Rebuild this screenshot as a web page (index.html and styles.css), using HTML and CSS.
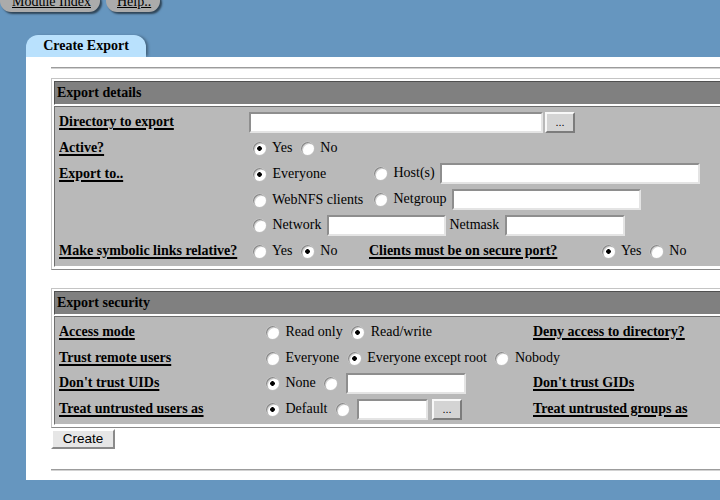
FILE: index.html
```html
<!DOCTYPE html>
<html>
<head>
<meta charset="utf-8">
<title>Create Export</title>
<link rel="stylesheet" href="styles.css">
</head>
<body>
<div class="topbar">
  <a class="pill pill-mod" href="#">Module Index</a>
  <a class="pill pill-help" href="#">Help..</a>
</div>
<div class="tab">Create Export</div>
<div class="panel">
  <hr class="rule">
  <div class="box">
    <div class="box-head">Export details</div>
    <div class="box-body">
      <div class="row">
        <div class="c1"><a class="lbl" href="#">Directory to export</a></div>
        <input class="tx tx-dir" type="text"><button class="dots dots-dir">...</button>
      </div>
      <div class="row">
        <div class="c1"><a class="lbl" href="#">Active?</a></div>
        <div class="c2"><input class="rb" type="radio" name="act" checked> Yes <input class="rb" type="radio" name="act"> No</div>
      </div>
      <div class="row">
        <div class="c1"><a class="lbl" href="#">Export to..</a></div>
        <div class="c2"><input class="rb" type="radio" name="to" checked> Everyone</div>
        <div class="c3"><input class="rb" type="radio" name="to"> Host(s) <input class="tx tx-host" type="text"></div>
      </div>
      <div class="row">
        <div class="c1"></div>
        <div class="c2"><input class="rb" type="radio" name="to"> WebNFS clients</div>
        <div class="c3"><input class="rb" type="radio" name="to"> Netgroup <input class="tx tx-ng" type="text"></div>
      </div>
      <div class="row">
        <div class="c1"></div>
        <div class="cflow"><input class="rb" type="radio" name="to"> Network <input class="tx tx-net" type="text"> Netmask <input class="tx tx-mask" type="text"></div>
      </div>
      <div class="row">
        <div class="c1"><a class="lbl" href="#">Make symbolic links relative?</a></div>
        <div class="c2"><input class="rb" type="radio" name="sym"> Yes <input class="rb" type="radio" name="sym" checked> No</div>
        <div class="c3"><a class="lbl" href="#">Clients must be on secure port?</a></div>
        <div class="c4"><input class="rb" type="radio" name="sec" checked> Yes <input class="rb" type="radio" name="sec"> No</div>
      </div>
    </div>
  </div>

  <div class="box box-sec">
    <div class="box-head">Export security</div>
    <div class="box-body">
      <div class="row">
        <div class="s1"><a class="lbl" href="#">Access mode</a></div>
        <div class="s2"><input class="rb" type="radio" name="am"> Read only <input class="rb" type="radio" name="am" checked> Read/write</div>
        <div class="s3"><a class="lbl" href="#">Deny access to directory?</a></div>
      </div>
      <div class="row">
        <div class="s1"><a class="lbl" href="#">Trust remote users</a></div>
        <div class="cflow"><input class="rb" type="radio" name="tr"> Everyone <input class="rb" type="radio" name="tr" checked> Everyone except root <input class="rb" type="radio" name="tr"> Nobody</div>
      </div>
      <div class="row">
        <div class="s1"><a class="lbl" href="#">Don't trust UIDs</a></div>
        <div class="s2"><input class="rb" type="radio" name="uid" checked> None <input class="rb" type="radio" name="uid"> <input class="tx tx-uid" type="text"></div>
        <div class="s3"><a class="lbl" href="#">Don't trust GIDs</a></div>
      </div>
      <div class="row">
        <div class="s1"><a class="lbl" href="#">Treat untrusted users as</a></div>
        <div class="s2"><input class="rb" type="radio" name="anon" checked> Default <input class="rb" type="radio" name="anon"> <input class="tx tx-anon" type="text"> <button class="dots">...</button></div>
        <div class="s3"><a class="lbl" href="#">Treat untrusted groups as</a></div>
      </div>
    </div>
  </div>
  <button class="create">Create</button>
  <hr class="rule rule-bottom">
</div>
</body>
</html>
```
FILE: styles.css
```css
html, body {
  overflow: hidden;
}
body {
  margin: 0;
  background: #6696bf;
  font-family: "Liberation Serif", "Times New Roman", serif;
  font-size: 14px;
  color: #000;
}
.topbar {
  display: flex;
  gap: 6px;
  margin-top: -10px;
  height: 22px;
}
.pill {
  display: block;
  box-sizing: border-box;
  height: 22px;
  padding-top: 2px;
  line-height: 20px;
  background: #ababab;
  border-radius: 11px;
  box-shadow: 2px 2px 2px rgba(0, 0, 0, 0.55);
  color: #000;
  text-decoration: underline;
  white-space: nowrap;
}
.pill-mod {
  width: 100px;
  padding-left: 12px;
}
.pill-help {
  width: 54px;
  padding-left: 11px;
}
.tab {
  margin: 23px 0 0 26px;
  width: 120px;
  height: 22px;
  line-height: 21px;
  text-align: center;
  font-weight: bold;
  background: #b9e1fd;
  border-radius: 12px 12px 0 0;
  box-shadow: 3px 0 3px -1px rgba(0, 0, 0, 0.35);
}
.panel {
  margin-left: 26px;
  width: 760px;
  background: #fff;
  padding: 10px 0 9px 25px;
}
.rule {
  margin: 0;
  height: 0;
  border: 0;
  border-top: 1px solid #9c9c9c;
  border-bottom: 1px solid #d2d2d2;
}
.rule-bottom {
  margin-top: 20px;
}
.box {
  margin-top: 9px;
  border: 1px solid;
  border-color: #c4c4c4 #8a8a8a #8a8a8a #c4c4c4;
  padding: 2px;
  background: #fff;
  display: flex;
  flex-direction: column;
  gap: 1px;
}
.box-sec {
  margin-top: 18px;
}
.box-head {
  box-sizing: border-box;
  height: 24px;
  line-height: 22px;
  padding-left: 2px;
  font-weight: bold;
  background: #808080;
  border: 1px solid;
  border-color: #505050 #fff #fff #505050;
}
.box-body {
  background: #b9b9b9;
  border: 1px solid;
  border-color: #6e6e6e #fff #fff #6e6e6e;
  padding: 2.5px 0 1.5px 4px;
}
.row {
  display: flex;
  align-items: center;
  height: 25.75px;
  white-space: nowrap;
}
.c1 { width: 189px; flex: none; }
.c2 { width: 121px; flex: none; }
.c3 { width: 228px; flex: none; }
.c4 { flex: none; }
.s1 { width: 202px; flex: none; }
.s2 { width: 272px; flex: none; }
.s3 { flex: none; }
.cflow { flex: none; }
.lbl {
  font-weight: bold;
  color: #000;
  text-decoration: underline;
  text-decoration-thickness: 2px;
  text-underline-offset: 2px;
}
.rb {
  -webkit-appearance: none;
  appearance: none;
  box-sizing: border-box;
  width: 13px;
  height: 13px;
  margin: 0 3px 0 5px;
  border-radius: 50%;
  background: #fff;
  box-shadow: inset 1px 1px 0 #8a8a8a, inset 2px 2px 0 #d2d2d2, 0 0 0 0.5px #c8c8c8;
  vertical-align: middle;
}
.rb:checked {
  background: radial-gradient(circle at 6.5px 6.5px, #000 0, #000 2px, #fff 2.6px);
}
.tx {
  box-sizing: border-box;
  height: 21px;
  margin: 0 0 0 2px;
  padding: 0;
  border: 2px solid;
  border-color: #8e8e8e #e4e4e4 #e4e4e4 #8e8e8e;
  background: #fff;
  vertical-align: middle;
}
.tx-dir { width: 294px; margin-left: 1px; }
.tx-host { width: 260px; }
.tx-ng { width: 189px; }
.tx-net { width: 119px; }
.tx-mask { width: 120px; }
.tx-uid { width: 120px; }
.tx-anon { width: 71px; }
.dots {
  box-sizing: border-box;
  width: 30px;
  height: 21px;
  margin: 0;
  padding: 0;
  border: 2px solid;
  border-color: #f8f8f8 #7c7c7c #7c7c7c #f8f8f8;
  background: #d4d4d4;
  font-family: "Liberation Sans", Arial, sans-serif;
  font-size: 11px;
  color: #000;
  vertical-align: middle;
}
.dots-dir { margin-left: 2px; }
.create {
  display: block;
  box-sizing: border-box;
  margin-top: 1px;
  width: 64px;
  height: 20px;
  padding: 0;
  border: 2px solid;
  border-color: #fff #8a8a8a #8a8a8a #fff;
  background: #e6e6e6;
  font-family: "Liberation Sans", Arial, sans-serif;
  font-size: 13.5px;
  color: #000;
}
```
